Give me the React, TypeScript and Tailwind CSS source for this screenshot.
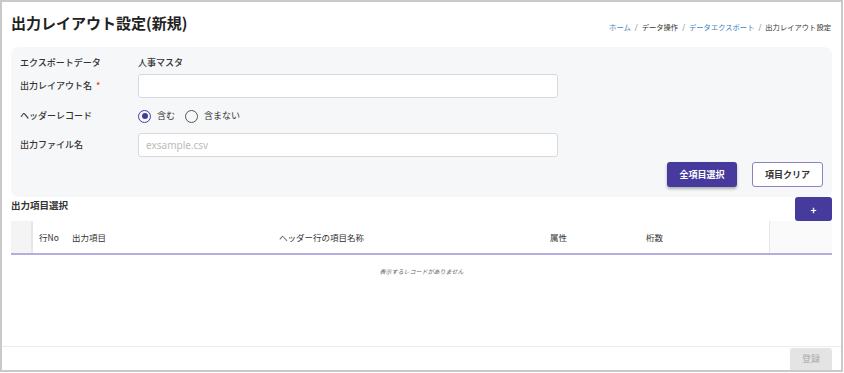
import { useState } from 'react';

const jp = "font-['Noto_Sans_CJK_JP','Noto_Sans',sans-serif]";

const columns = [
  { label: '行No', w: 'w-[33px]' },
  { label: '出力項目', w: 'w-[207px]' },
  { label: 'ヘッダー行の項目名称', w: 'w-[271px]' },
  { label: '属性', w: 'w-[96px]' },
  { label: '桁数', w: 'w-[100px]' },
];

function Radio({ checked, label, onClick }: { checked: boolean; label: string; onClick: () => void }) {
  return (
    <button type="button" onClick={onClick} className="flex items-center gap-[6px]">
      <span
        className={
          'w-[13px] h-[13px] rounded-full border-[1.5px] flex items-center justify-center ' +
          (checked ? 'border-[#463b9c]' : 'border-[#555]')
        }
      >
        {checked && <span className="w-[6px] h-[6px] rounded-full bg-[#463b9c]" />}
      </span>
      <span className="text-[9px] text-[#333]">{label}</span>
    </button>
  );
}

export default function App() {
  const [header, setHeader] = useState(true);

  return (
    <div className={`w-[844px] h-[373px] bg-white ${jp}`}>
      <div className="w-[843px] h-[372px] border-2 border-[#c9c9c9] flex flex-col text-[#333]">
        {/* Header */}
        <div className="flex justify-between items-start px-[9px] pt-[10px] h-[45px]">
          <h1 className="text-[15px] font-bold text-[#222] leading-[22px]">出力レイアウト設定(新規)</h1>
          <nav className="flex items-center gap-[4px] text-[7.3px] mt-[10px] mr-[1px]">
            <span className="text-[#3d7fc1]">ホーム</span>
            <span className="text-[#666]">/</span>
            <span>データ操作</span>
            <span className="text-[#666]">/</span>
            <span className="text-[#3d7fc1]">データエクスポート</span>
            <span className="text-[#666]">/</span>
            <span>出力レイアウト設定</span>
          </nav>
        </div>

        {/* Form panel */}
        <div className="mx-[9px] bg-[#f6f7f9] rounded-[8px] pt-[6px] pb-[10px] px-[9px]">
          <div className="flex items-center h-[20px]">
            <span className="w-[118px] text-[9px] font-medium">エクスポートデータ</span>
            <span className="text-[9px] font-medium">人事マスタ</span>
          </div>
          <div className="flex items-center h-[24px] mt-[1px]">
            <span className="w-[118px] text-[9px] font-medium">
              出力レイアウト名<span className="text-[#e53935] ml-[4px]">*</span>
            </span>
            <input className="w-[420px] h-[24px] bg-white border border-[#d8d9dc] rounded-[3px] outline-none" />
          </div>
          <div className="flex items-center h-[24px] mt-[6px]">
            <span className="w-[118px] text-[9px] font-medium">ヘッダーレコード</span>
            <div className="flex items-center gap-[10px]">
              <Radio checked={header} label="含む" onClick={() => setHeader(true)} />
              <Radio checked={!header} label="含まない" onClick={() => setHeader(false)} />
            </div>
          </div>
          <div className="flex items-center h-[24px] mt-[5px]">
            <span className="w-[118px] text-[9px] font-medium">出力ファイル名</span>
            <input
              placeholder="exsample.csv"
              className="w-[420px] h-[24px] bg-white border border-[#d8d9dc] rounded-[3px] px-[7px] text-[10px] font-['Noto_Sans',sans-serif] placeholder:text-[#bbb] outline-none"
            />
          </div>
          <div className="flex justify-end gap-[15px] mt-[5px]">
            <button className="w-[70px] h-[25px] rounded-[3px] bg-[#463b9c] text-white text-[9px] font-bold shadow-[0_2px_3px_rgba(0,0,0,0.3)]">
              全項目選択
            </button>
            <button className="w-[71px] h-[25px] rounded-[3px] bg-white border border-[#8a83c4] text-[#333] text-[9px] font-bold">
              項目クリア
            </button>
          </div>
        </div>

        {/* Item selection */}
        <div className="flex justify-between items-start mx-[9px] h-[24px]">
          <span className="text-[9.5px] font-bold leading-[14px] pt-[1px]">出力項目選択</span>
          <button className="w-[37px] h-[24px] rounded-[3px] bg-[#463b9c] text-white text-[10px] font-bold">+</button>
        </div>

        <div className="mx-[9px]">
          <div className="flex h-[34px] border-b-2 border-[#b4aee0]">
            <div className="w-[22px] bg-[#f4f4f4] border-r-2 border-[#e6e6e6]" />
            {columns.map((c) => (
              <div key={c.label} className={`${c.w} flex items-center pl-[6px] text-[8.5px] text-[#333]`}>
                {c.label}
              </div>
            ))}
            <div className="flex-1" />
            <div className="w-[63px] bg-[#fafafa] border-l border-[#e6e6e6]" />
          </div>
          <div className="h-[32px] flex items-center justify-center text-[6px] italic text-[#666]">
            表示するレコードがありません
          </div>
        </div>

        <div className="flex-1" />

        {/* Footer */}
        <div className="border-t border-[#ececec] flex justify-end pr-[9px] pt-[1px]">
          <button disabled className="w-[42px] h-[22px] bg-[#e4e4e4] text-[#aaa] text-[9px] rounded-t-[3px]">
            登録
          </button>
        </div>
      </div>
    </div>
  );
}
